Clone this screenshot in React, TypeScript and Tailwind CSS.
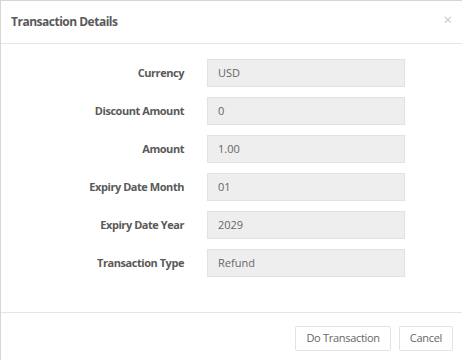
const fields = [
  { label: "Currency", value: "USD" },
  { label: "Discount Amount", value: "0" },
  { label: "Amount", value: "1.00" },
  { label: "Expiry Date Month", value: "01" },
  { label: "Expiry Date Year", value: "2029" },
  { label: "Transaction Type", value: "Refund" },
];

const App = () => {
  return (
    <div
      className="w-[462px] h-[360px] bg-white border-t border-l border-[#d6d6d6] flex flex-col text-[#555]"
      style={{ fontFamily: '"Open Sans", "Noto Sans", sans-serif' }}
    >
      <div className="h-[43px] shrink-0 flex items-center justify-between pl-[10px] pr-[10px] border-b border-[#e5e5e5]">
        <span className="text-[12px] font-bold tracking-[-0.5px] text-[#595959]">Transaction Details</span>
        <span className="text-[15px] leading-none text-[#c8c8c8] -mt-[5px]">×</span>
      </div>

      <div className="flex-1 flex flex-col gap-[10px] pt-[15px] border-b border-[#e5e5e5]">
        {fields.map((f) => (
          <div key={f.label} className="flex items-center h-[28px]">
            <label className="w-[183px] text-right text-[11px] font-bold tracking-[-0.45px] text-[#595959]">
              {f.label}
            </label>
            <div className="ml-[23px] w-[198px] h-[28px] flex items-center pl-[10px] bg-[#eeeeee] border border-[#e2e2e2] text-[11px] text-[#666]">
              {f.value}
            </div>
          </div>
        ))}
      </div>

      <div className="h-[47px] shrink-0 flex items-start justify-end gap-[8px] pt-[13px] pr-[9px]">
        <button className="h-[25px] px-[10px] border border-[#e3e3e3] rounded-[2px] bg-white text-[11px] tracking-[-0.3px] text-[#666]">
          Do Transaction
        </button>
        <button className="h-[25px] px-[10px] border border-[#e3e3e3] rounded-[2px] bg-white text-[11px] tracking-[-0.3px] text-[#666]">
          Cancel
        </button>
      </div>
    </div>
  );
};

export default App;
